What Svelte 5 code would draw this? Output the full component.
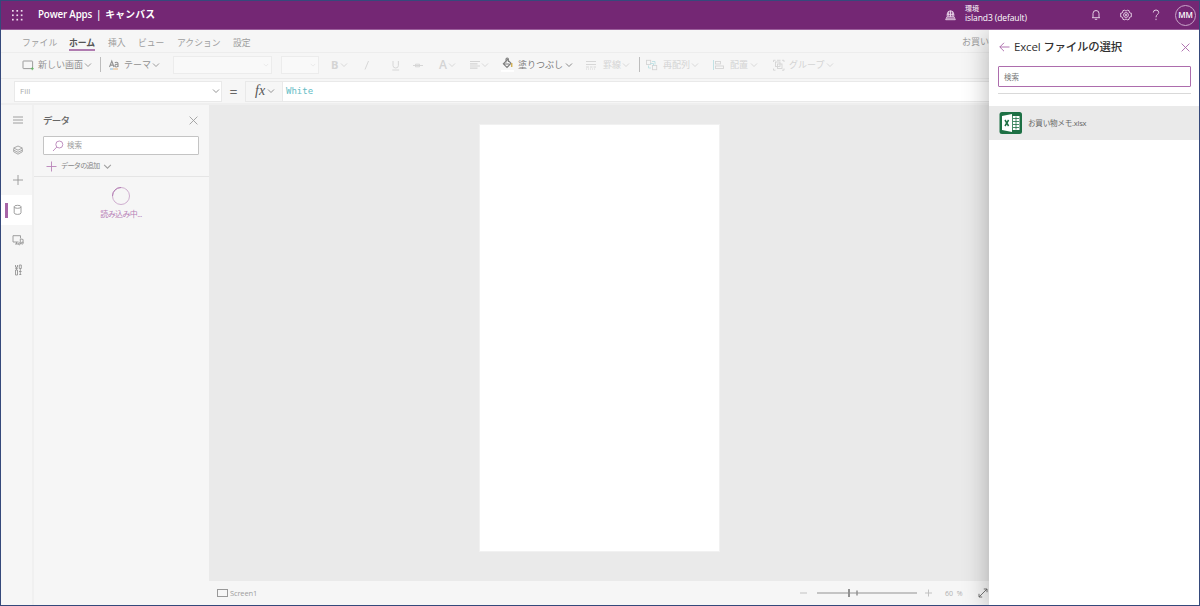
<script>
  const menu = [
    { label: 'ファイル', w: 47, len: 35 },
    { label: 'ホーム', w: 39, len: 26, active: true },
    { label: '挿入', w: 30, len: 17 },
    { label: 'ビュー', w: 39, len: 26 },
    { label: 'アクション', w: 56, len: 44 },
    { label: '設定', w: 30, len: 17 }
  ];
  const tools = [
    { icon: 'screen', w: 78, iw: 16, label: '新しい画面', lw: 46, tone: 'mid' },
    { sep: true, w: 9 },
    { icon: 'theme', w: 64, iw: 15, label: 'テーマ', lw: 28, tone: 'mid' },
    { box: 99, w: 108 },
    { box: 38, w: 50 },
    { glyph: 'B', w: 30, iw: 9, arrow: true, bold: true },
    { icon: 'italic', w: 26, iw: 12 },
    { icon: 'underline', w: 25, iw: 12 },
    { icon: 'strike', w: 27, iw: 12 },
    { glyph: 'A', w: 31, iw: 9, arrow: true },
    { icon: 'align', w: 32, iw: 11, arrow: true },
    { icon: 'bucket', w: 84, iw: 16, label: '塗りつぶし', lw: 47, tone: 'dark' },
    { icon: 'lines', w: 53, iw: 17, label: '罫線', lw: 19 },
    { sep: true, w: 7 },
    { icon: 'reorder', w: 67, iw: 17, label: '再配列', lw: 28 },
    { icon: 'place', w: 60, iw: 17, label: '配置', lw: 20 },
    { icon: 'group', w: 70, iw: 16, label: 'グループ', lw: 37 }
  ];
  const rail = ['menu', 'layers', 'plus', 'data', 'media', 'tools'];
</script>

{#snippet chev(size)}
  <svg class="chev" width={size} height={size} viewBox="0 0 8 8"><path d="M1 2.500 4 5.500 7 2.500" /></svg>
{/snippet}

{#snippet cross()}
  <svg class="line" width="9" height="9" viewBox="0 0 9 9"><path d="M.6.6 8.4 8.4M8.4.6.6 8.4" /></svg>
{/snippet}

{#snippet icon(name)}
  <svg class="line" width="12" height="14" viewBox="0 0 12 14">
    {#if name === 'screen'}
      <rect x="1" y="3" width="9.6" height="7.6" rx=".5" /><path class="green" d="M8.8 10.7h3M10.3 9.2v3" />
    {:else if name === 'theme'}
      <path d="M.5 9 2.800 3 5 9M1.200 7.100h3M9 9V5.500q0-1.300-1.400-1.300T6 5M9 6.300q-3-.2-3 1.300T7.300 9 9 7.600" stroke-width="1.100" />
      <path class="blue" d="M1 11h3" /><path class="orange" d="M4 11h5" />
    {:else if name === 'italic'}
      <path d="M4 11.500 7.500 3" />
    {:else if name === 'underline'}
      <path d="M6 3v4.500q0 2.500 2.700 2.500t2.700-2.500V3M5.300 12h6.800" />
    {:else if name === 'strike'}
      <path d="M1 7.500h10" /><path d="M3.500 6.200h4v2.600h-4z" />
    {:else if name === 'align'}
      <path d="M0 3.500h10M0 5.800h7.500M0 8h10M0 10.200h7.500" stroke-width="1.200" />
    {:else if name === 'bucket'}
      <path d="M1.300 5.800 5.500 1.500 9 5.300 5 9.500zM4 4.500V1.300q0-1.300 1.200-1.300t1.200 1.300V4M1.500 6h6" stroke-width="1.100" />
      <path class="yellow" d="M9.700 5v4" /><path class="white" d="M-1 12.900h13" />
    {:else if name === 'lines'}
      <path d="M0 3.500h10M0 6.500h10M0 9h3M4 9h2.500M7.500 9h2.500M0 11h1M2 11h1M4 11h1M6 11h1M8 11h1" />
    {:else if name === 'reorder'}
      <rect x=".5" y="2.300" width="4.200" height="4.200" /><rect x="6.500" y="7.500" width="4.200" height="4.200" />
      <path class="teal" d="M6 3.500h3v3M5 10H2.500V7.500M4 5.500h3.500V8" />
    {:else if name === 'place'}
      <path class="teal" d="M.5 2v10" /><rect x="2.500" y="3.500" width="5" height="2.500" /><rect x="2.500" y="8" width="8" height="2.500" />
    {:else if name === 'group'}
      <rect x="2.500" y="4" width="4.500" height="4.500" /><rect x="4.500" y="6" width="4.500" height="4.500" />
      <path d="M.5 4V2.300h2M9 2.300h2V4M.5 10.500v1.700h2M9 12.200h2v-1.700M4 2.300h3.500" />
    {:else if name === 'menu'}
      <path d="M1 4h10M1 7h10M1 10h10" />
    {:else if name === 'layers'}
      <path d="M6 3 10.300 5 6 7.200 1.700 5zM1.700 5.500v3.300L6 11.200l4.300-2.400V5.500M1.700 7.200 6 9.300 10.300 7.200" stroke-width=".8" />
    {:else if name === 'plus'}
      <path d="M1 7h10M6 2v10" />
    {:else if name === 'data'}
      <ellipse cx="5.600" cy="3.800" rx="3.400" ry="1.500" /><path d="M2.200 3.800v6q0 1.600 3.400 1.600T9 9.800v-6" />
    {:else if name === 'media'}
      <path d="M6.500 9H1V2.700h7.500V5M3 11h3M4.500 9v2M8.300 11V5.800l2.800.7V10" /><circle cx="7.300" cy="10.800" r="1" /><circle cx="10.200" cy="10.100" r="1" />
    {:else if name === 'tools'}
      <path d="M3.500 2v2.200h2V2M4.500 4.200V7M3.500 7h2v5h-2zM7.300 2h2v3.500h-2zM8.300 5.500V12M7 8.500h2.600M3.300 5.500h2.400M7.300 11.500h2" stroke-width=".9" />
    {/if}
  </svg>
{/snippet}

<div class="app">
  <header>
    <svg class="waffle" width="11" height="11" viewBox="0 0 11 11">
      {#each [0, 4.400, 8.800] as y}{#each [0, 4.400, 8.800] as x}<rect {x} {y} width="1.700" height="1.700" />{/each}{/each}
    </svg>
    <h1>Power Apps<i>|</i><b>キャンバス</b></h1>
    <svg class="globe" width="11" height="11" viewBox="0 0 11 11">
      <path d="M2.200 6.500V4Q2.500.8 5.500.8T8.800 4v2.500M2.200 4.300h6.600M5.500.8v6M3.900 1.500q-.6 2.500 0 5M7.100 1.500q.6 2.500 0 5M2 6.800.7 9.700h9.600L9 6.800zM2 8.200h7" />
    </svg>
    <div class="env"><small>環境</small><span>island3 (default)</span></div>
    <svg class="bell" width="10" height="12" viewBox="0 0 10 12"><path d="M2 8.500V4.500Q2 1.500 5 1.500T8 4.500v4M1 8.700h8M3.800 10.300h2.400" /></svg>
    <svg class="gear" width="12" height="12" viewBox="0 0 12 12">
      <path d="M4.500 1 5.200 1.800h1.600L7.500 1l1.700.8v1.400l.8.800 1.300.2v3.600L10 8l-.8.8v1.400l-1.700.8-.7-.8H5.200l-.7.8-1.700-.8V8.800L2 8 .7 7.800V4.200L2 4l.8-.8V1.800z" /><circle cx="6" cy="6" r="2.400" /><circle cx="6" cy="6" r=".7" />
    </svg>
    <svg class="help" width="8" height="12" viewBox="0 0 8 12"><path d="M1.300 3.500Q1.300 1 4 1T6.700 3.500C6.700 5.300 4 5.500 4 8.300M4 9.700v1.400" /></svg>
    <span class="avatar">MM</span>
  </header>

  <nav class="menu">
    {#each menu as m}
      <span class="item" style:width="{m.w}px"><span class="word" class:active={m.active} style:width="{m.len}px">{m.label}</span></span>
    {/each}
    <span class="title">お買い物メモ</span>
  </nav>

  <div class="toolbar">
    {#each tools as t}
      <div class="tool {t.tone ?? 'faint'}" style:width="{t.w}px">
        {#if t.sep}
          <span class="sep"></span>
        {:else if t.box}
          <span class="combo" style:width="{t.box}px">{@render chev(6)}</span>
        {:else}
          <span class="slot" style:width="{t.iw}px">
            {#if t.glyph}<span class="glyph" class:bold={t.bold}>{t.glyph}</span>{:else}{@render icon(t.icon)}{/if}
          </span>
          {#if t.label}<span class="label" style:width="{t.lw}px">{t.label}</span>{/if}
          {#if t.label || t.arrow}{@render chev(8)}{/if}
        {/if}
      </div>
    {/each}
  </div>

  <div class="formula">
    <div class="prop"><span>Fill</span>{@render chev(8)}</div>
    <span class="eq">=</span>
    <div class="fx"><em>fx</em>{@render chev(8)}</div>
    <div class="code">White</div>
  </div>

  <main>
    <aside class="rail">
      {#each rail as r}
        <span class="cell" class:on={r === 'data'}>{@render icon(r)}</span>
      {/each}
    </aside>
    <section class="data">
      <div class="head"><h2>データ</h2>{@render cross()}</div>
      <div class="search">
        <svg class="line" width="12" height="12" viewBox="0 0 12 12"><circle cx="7.300" cy="4.500" r="3.500" /><path d="M4.800 7 1 11" /></svg>
        <span>検索</span>
      </div>
      <div class="add">
        <svg class="line" width="11" height="11" viewBox="0 0 11 11"><path d="M.5 5.500h10M5.500.5v10" /></svg>
        <span>データの追加</span>{@render chev(9)}
      </div>
      <div class="loading">
        <svg width="20" height="20" viewBox="0 0 20 20"><circle cx="10" cy="10" r="8.500" /><path d="M1.500 10A8.500 8.500 0 0 1 10 1.500" /></svg>
        <span>読み込み中...</span>
      </div>
    </section>
    <section class="stage">
      <div class="canvas"><div class="phone"></div></div>
      <footer>
        <span class="thumb"></span><span class="name">Screen1</span>
        <svg class="line zoomer" width="136" height="12" viewBox="0 0 136 12">
          <path class="pale" d="M0 6h7M125 6h7M128.500 2.500v7" /><path d="M17 6h100" stroke-width="1.200" /><path d="M49 2v8" stroke-width="2" /><path d="M57 3.500v5" stroke-width="1.500" />
        </svg>
        <span class="pct">60&nbsp; %</span>
        <svg class="line expand" width="10" height="10" viewBox="0 0 10 10"><path d="M1 9 9 1M5.800 1H9v3.200M1 5.800V9h3.200" /></svg>
      </footer>
    </section>
  </main>

  <div class="picker">
    <div class="phead">
      <svg class="line" width="11" height="10" viewBox="0 0 11 10"><path d="M10.500 5H.8M5 .8.8 5 5 9.200" /></svg>
      <h3>Excel <b>ファイルの選択</b></h3>
      {@render cross()}
    </div>
    <div class="pinput">検索</div>
    <hr />
    <div class="file">
      <svg width="24" height="24" viewBox="0 0 24 24">
        <rect x=".5" y="1" width="22.500" height="22" rx="2.500" fill="#1d7044" />
        <path d="M3 5 13 3v18L3 19z" fill="#fff" /><path d="M13.800 5h6.700v14h-6.700z" fill="#fff" />
        <path d="M14 7.500h6M14 10.500h6M14 13.500h6M14 16.500h6M17 5.500v13" stroke="#1d7044" stroke-width=".8" />
        <path d="M6 9 9.600 15M9.600 9 6 15" stroke="#1d7044" stroke-width="1.500" />
      </svg>
      <span>お買い物メモ<i>.xlsx</i></span>
    </div>
  </div>
</div>

<style>
  :global(body) { margin: 0; }
  .app, .app * { box-sizing: border-box; }
  .app {
    position: relative; width: 1200px; height: 606px; overflow: hidden;
    display: flex; flex-direction: column; border: 1px solid #35497b;
    background: #f6f6f6; color: #9e9e9e; white-space: nowrap;
    font: 9px/1 "Open Sans", "Noto Sans CJK JP", sans-serif;
  }
  svg { display: block; flex: none; overflow: visible; fill: none; }
  .line, .chev { stroke: currentColor; stroke-width: .9; }
  i { font-style: normal; }
  h1, h2, h3 { margin: 0; font-weight: 400; }

  header { flex: none; height: 29px; display: flex; align-items: center; background: #742774; border-bottom: 1px solid #9c5f9c; color: #fff; padding-left: 11px; }
  header svg { stroke: #eedcee; stroke-width: .9; }
  header .waffle { fill: #eedcee; stroke: none; }
  h1 { flex: none; width: 922px; padding-left: 15px; font-size: 9.800px; font-weight: 600; letter-spacing: -.18px; }
  h1 i { margin: 0 4px; }
  h1 b { font-weight: 700; letter-spacing: .2px; }
  .globe { margin-right: 9px; }
  .env { flex: none; width: 126px; height: 27px; display: flex; flex-direction: column; justify-content: center; gap: 2px; font-size: 8.500px; letter-spacing: -.1px; padding-bottom: 3px; }
  .env small { font-size: 7px; }
  .bell { margin-right: 19px; }
  .gear { margin-right: 20px; }
  .help { margin-right: 15px; }
  .avatar { flex: none; width: 21px; height: 21px; border: 1px solid #c9a5c9; border-radius: 50%; font-size: 8px; font-weight: 600; display: grid; place-items: center; }

  .menu { flex: none; height: 23px; display: flex; align-items: center; padding: 2px 0 0 21px; border-bottom: 1px solid #ededed; }
  .item, .word { flex: none; }
  .word { display: block; height: 17px; line-height: 18px; font-size: 8.800px; }
  .word.active { color: #555; font-weight: 700; border-bottom: 2px solid #b07cb0; }
  .title { margin-left: 699px; padding-bottom: 2px; font-size: 9px; }

  .toolbar { flex: none; height: 26px; display: flex; align-items: center; padding-left: 21px; border-bottom: 1px solid #ebebeb; }
  .tool { flex: none; height: 26px; padding-bottom: 2px; display: flex; align-items: center; font-size: 9px; }
  .faint { color: #d4d4d4; }
  .mid { color: #929292; }
  .dark { color: #7c7c7c; }
  .slot, .label { flex: none; }
  .combo { height: 18px; display: flex; align-items: center; justify-content: flex-end; padding-right: 2px; border: 1px solid #ececec; background: #f9f9f9; color: #e4e4e4; }
  .sep { width: 1px; height: 15px; background: #bdbdbd; }
  .glyph { font-size: 12px; font-weight: 600; }
  .bold { font-weight: 700; font-size: 11px; }
  .green { stroke: #65b665; } .blue { stroke: #79b6dd; } .orange { stroke: #e5af72; } .yellow { stroke: #d3b157; stroke-width: 1.500; }
  .white { stroke: #fff; stroke-width: 2; } .teal { stroke: #bce0e3; }

  .formula { flex: none; height: 26px; display: flex; align-items: center; border-bottom: 2px solid #efefef; padding-left: 13px; }
  .prop, .fx, .code { height: 21px; display: flex; align-items: center; border: 1px solid #e9e9e9; }
  .prop { width: 208px; background: #fff; justify-content: space-between; padding: 0 1px 0 5px; font-size: 8px; color: #aaa; }
  .prop .chev, .fx .chev { color: #888; }
  .eq { width: 23px; padding-top: 1px; text-align: center; font-size: 14px; color: #666; }
  .fx { width: 38px; padding-left: 9px; gap: 2px; color: #555; }
  .fx em { font: italic 14px/1 "Liberation Serif", serif; }
  .code { flex: 1; background: #fff; border-left: 0; padding-left: 3px; color: #65bcc5; font: 9px/1 "DejaVu Sans Mono", monospace; }

  main { flex: 1; min-height: 0; display: flex; }
  .rail { flex: none; width: 33px; border-right: 2px solid #f0f0f0; }
  .cell { height: 30px; padding-left: 11px; display: flex; align-items: center; color: #959595; }
  .cell.on { background: linear-gradient(#a765a7, #a765a7) 4px 8px / 3px 15px no-repeat #fff; }
  .data { flex: none; width: 175px; }
  .head { height: 31px; display: flex; align-items: center; justify-content: space-between; padding: 0 11px 1px 9px; }
  h2 { padding-top: 1px; font-size: 9.500px; font-weight: 500; color: #666; letter-spacing: -.7px; }
  .search { height: 19px; margin: 0 10px 0 9px; border: 1px solid #c4c4c4; border-radius: 1px; background: #fff; display: flex; align-items: center; gap: 3px; padding-left: 8px; font-size: 7.500px; }
  .search svg, .add > svg:first-child { color: #b985b9; }
  .add { height: 22px; display: flex; align-items: center; padding: 1px 0 0 12px; border-bottom: 1px solid #e5e5e5; font-size: 7.200px; letter-spacing: -.8px; }
  .add span { width: 42px; margin-left: 4px; color: #888; }
  .loading { display: flex; flex-direction: column; align-items: center; padding: 9px 1px 0 0; gap: 4px; color: #b680b6; font-size: 8px; letter-spacing: -.6px; }
  .loading circle { stroke: #cfaecf; } .loading path { stroke: #b57fb5; }

  .stage { flex: 1; display: flex; flex-direction: column; }
  .canvas { flex: 1; background: #eaeaea; padding: 19px 0 0 270px; }
  .phone { width: 241px; height: 428px; background: #fff; border: 1px solid #f1f1f1; }
  footer { flex: none; height: 24px; display: flex; align-items: center; padding-left: 8px; }
  .thumb { width: 11px; height: 8px; border: 1px solid #999; }
  .name { width: 572px; padding: 1px 0 0 2px; font-size: 7.500px; letter-spacing: -.15px; }
  .zoomer { color: #929292; } .pale { stroke: #bcbcbc; }
  .pct { width: 42px; padding-left: 9px; font-size: 7px; color: #b0b0b0; }
  .expand { color: #666; }

  .picker { position: absolute; z-index: 2; left: 988px; top: 29px; width: 210px; bottom: 0; background: #fff; box-shadow: 0 4px 25px rgba(0, 0, 0, .29); clip-path: inset(0 0 0 -50px); color: #333; }
  .phead { height: 36px; display: flex; align-items: center; padding: 0 9px 2px 10px; color: #a865a8; }
  h3 { flex: 1; padding-left: 4px; font-size: 11.500px; font-weight: 400; color: #303030; letter-spacing: -.15px; }
  h3 b { font-weight: 500; font-size: 11.400px; }
  .pinput { height: 21px; margin: 0 8px 0 9px; border: 1px solid #ad6dad; border-radius: 1px; padding-left: 5px; font-size: 7.500px; line-height: 20px; color: #777; }
  hr { margin: 6px 8px 12px 9px; border: 0; border-top: 1px solid #d9d9d9; }
  .file { height: 34px; display: flex; align-items: center; gap: 5px; padding-left: 10px; background: #eaeaea; font-size: 7.600px; letter-spacing: -.25px; color: #666; }
  .file span { padding-top: 2px; }
</style>
